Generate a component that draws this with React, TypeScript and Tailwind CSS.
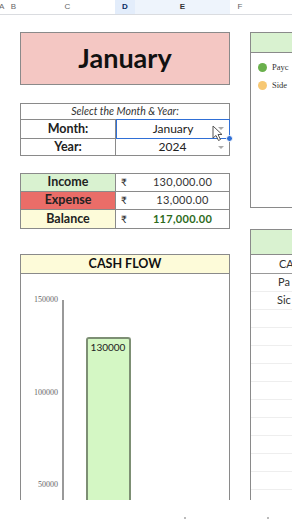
import React from "react";

const font = { fontFamily: "Lato, 'Open Sans', sans-serif" };

function Cursor() {
  return (
    <svg width="12" height="17" viewBox="0 0 12 17" className="absolute left-[212px] top-[125px]">
      <path d="M1 1 L1 13 L4 10.5 L6.5 15.5 L8.5 14.5 L6 9.5 L10 9.5 Z" fill="#fff" stroke="#555" strokeWidth="1" strokeLinejoin="round" />
    </svg>
  );
}

export default function App() {
  const rows = Array.from({ length: 12 });
  return (
    <div className="relative w-[292px] h-[520px] overflow-hidden bg-white" style={font}>
      {/* column header */}
      <div className="grid grid-cols-[7px_13px_95px_20px_95px_20px_1fr] h-[15px] border-b border-[#dadce0] text-[8px] text-[#666]" style={{ fontFamily: "Arial, 'Liberation Sans', sans-serif" }}>
        <div className="flex items-center justify-start -ml-[1px]">A</div>
        <div className="flex items-center justify-center">B</div>
        <div className="flex items-center justify-center">C</div>
        <div className="flex items-center justify-center bg-[#e3edfb] font-bold text-[#0b2e63]">D</div>
        <div className="flex items-center justify-center bg-[#eef4fc] font-bold text-[#333]">E</div>
        <div className="flex items-center justify-center">F</div>
        <div></div>
      </div>

      <div className="flex pl-[20px] gap-[20px] pt-[17px]">
        {/* left column */}
        <div className="w-[210px] shrink-0 flex flex-col">
          <div className="h-[53px] bg-[#f4c7c3] border border-[#8a8a8a] flex items-center justify-center text-[27px] font-bold text-[#111]">
            January
          </div>

          {/* select */}
          <div className="mt-[18px] border border-[#8a8a8a] text-[#222]">
            <div className="h-[16px] flex items-center justify-center italic text-[10.5px] text-[#333] border-b border-[#8a8a8a]">
              Select the Month &amp; Year:
            </div>
            <div className="h-[19px] flex border-b border-[#8a8a8a]">
              <div className="w-[95px] flex items-center justify-center font-bold text-[12.5px] border-r border-[#8a8a8a]">Month:</div>
              <div className="relative flex-1 flex items-center justify-center text-[12px] border-[1.5px] border-[#2f6fd6] -my-[1px] -mr-[1px]">
                January
                <span className="absolute right-[5px] top-[7px] w-0 h-0 border-l-[3px] border-r-[3px] border-t-[3px] border-l-transparent border-r-transparent border-t-[#aaa]"></span>
                <span className="absolute -right-[4px] -bottom-[4px] w-[7px] h-[7px] rounded-full bg-[#2f6fd6] border border-white"></span>
              </div>
            </div>
            <div className="h-[16px] flex">
              <div className="w-[95px] flex items-center justify-center font-bold text-[12.5px] border-r border-[#8a8a8a]">Year:</div>
              <div className="relative flex-1 flex items-center justify-center text-[12px]">
                2024
                <span className="absolute right-[5px] top-[7px] w-0 h-0 border-l-[3px] border-r-[3px] border-t-[3px] border-l-transparent border-r-transparent border-t-[#aaa]"></span>
              </div>
            </div>
          </div>

          {/* summary */}
          <div className="mt-[17px] border border-[#8a8a8a] text-[#222]">
            {[
              { l: "Income", v: "130,000.00", bg: "bg-[#d9f2d0]", vc: "text-[#333]" },
              { l: "Expense", v: "13,000.00", bg: "bg-[#ea6d68]", vc: "text-[#333]" },
              { l: "Balance", v: "117,000.00", bg: "bg-[#fdfbd9]", vc: "text-[#2e6b1c] font-bold" },
            ].map((r, i) => (
              <div key={r.l} className={`h-[18px] flex ${i < 2 ? "border-b border-[#8a8a8a]" : ""}`}>
                <div className={`w-[95px] flex items-center justify-center font-bold text-[12.5px] border-r border-[#8a8a8a] ${r.bg}`}>{r.l}</div>
                <div className="flex-1 flex items-center text-[11px]">
                  <span className="w-[20px] pl-[5px] text-[10px]">₹</span>
                  <span className={`flex-1 text-center tracking-[0.3px] ${r.vc}`}>{r.v}</span>
                </div>
              </div>
            ))}
          </div>

          {/* chart */}
          <div className="mt-[25px] h-[246px] border-l border-r border-t border-[#8a8a8a] flex flex-col overflow-hidden">
            <div className="h-[19px] shrink-0 bg-[#fdfbd9] border-b border-[#8a8a8a] flex items-center justify-center font-bold text-[12.5px] text-[#111]">
              CASH FLOW
            </div>
            <div className="relative flex-1 flex">
              <div className="w-[41px] shrink-0 relative text-[8px] text-[#666]" style={{ fontFamily: "'Liberation Serif', serif" }}>
                <span className="absolute right-[4px] top-[20px]">150000</span>
                <span className="absolute right-[4px] top-[113px]">100000</span>
                <span className="absolute right-[4px] top-[205px]">50000</span>
              </div>
              <div className="mt-[26px] w-[1.5px] bg-[#999]"></div>
              <div className="ml-[22px] mt-[63px] w-[45px] bg-[#d4f7c4] border-l-2 border-r-2 border-t-2 border-[#7d8f74] rounded-t-[3px] flex justify-center">
                <span className="mt-[1px] text-[10px] text-[#222]">130000</span>
              </div>
            </div>
          </div>
        </div>

        {/* right column */}
        <div className="w-[60px] shrink-0 flex flex-col">
          <div className="h-[176px] border border-[#8a8a8a]">
            <div className="h-[20px] bg-[#d9f2d0] border-b border-[#8a8a8a]"></div>
            <div className="pl-[7px] pt-[9px] flex flex-col gap-[8px] text-[8.5px] text-[#333]" style={{ fontFamily: "'Liberation Serif', serif" }}>
              <div className="flex items-center gap-[5px] whitespace-nowrap h-[10px]"><span className="shrink-0 w-[9px] h-[9px] rounded-full bg-[#6ab04c]"></span>Payc</div>
              <div className="flex items-center gap-[5px] whitespace-nowrap h-[10px]"><span className="shrink-0 w-[9px] h-[9px] rounded-full bg-[#f7c873]"></span>Side</div>
            </div>
          </div>
          <div className="mt-[21px] h-[271px] border-l border-r border-t border-[#8a8a8a] flex flex-col overflow-hidden">
            <div className="h-[25px] shrink-0 bg-[#d9f2d0] border-b border-[#8a8a8a]"></div>
            <div className="h-[19px] shrink-0 border-b border-[#999] flex items-center pl-[28px] text-[11px] text-[#333]">CA</div>
            <div className="h-[18px] shrink-0 border-b border-[#eee] flex items-center pl-[27px] text-[11px] text-[#333]">Pa</div>
            <div className="h-[18px] shrink-0 border-b border-[#eee] flex items-center pl-[26px] text-[11px] text-[#333]">Sic</div>
            {rows.map((_, i) => (
              <div key={i} className="h-[18px] shrink-0 border-b border-[#eee]"></div>
            ))}
          </div>
        </div>
      </div>

      <Cursor />
      <span className="absolute left-[184px] top-[517px] w-[2px] h-[2px] bg-[#bbb]"></span>
      <span className="absolute left-[267px] top-[517px] w-[2px] h-[2px] bg-[#bbb]"></span>
    </div>
  );
}
